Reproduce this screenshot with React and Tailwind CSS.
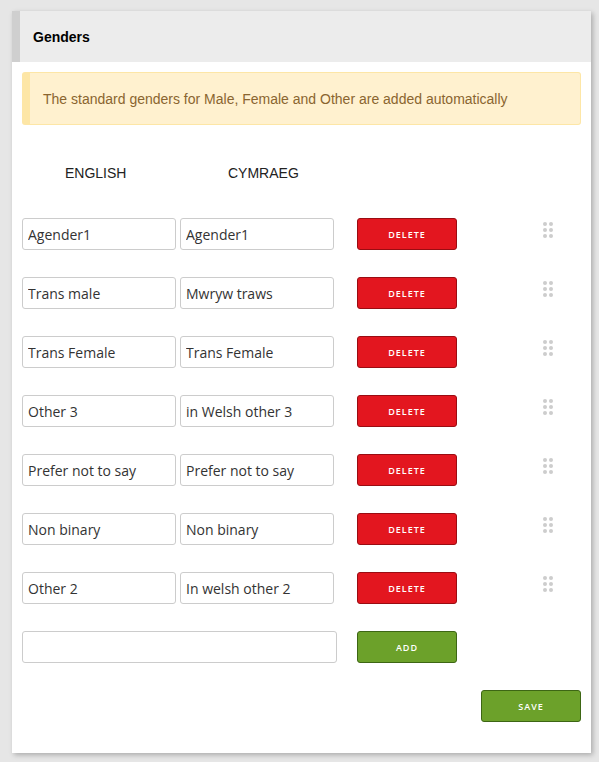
import React from "react";

const rows = [
  ["Agender1", "Agender1"],
  ["Trans male", "Mwryw traws"],
  ["Trans Female", "Trans Female"],
  ["Other 3", "in Welsh other 3"],
  ["Prefer not to say", "Prefer not to say"],
  ["Non binary", "Non binary"],
  ["Other 2", "In welsh other 2"],
];

function Dots() {
  return (
    <div className="grid grid-cols-2 gap-x-[2px] gap-y-[2px] w-[10px]">
      {Array.from({ length: 6 }).map((_, i) => (
        <span key={i} className="block w-[4px] h-[4px] rounded-full bg-[#cdcdcd]" />
      ))}
    </div>
  );
}

const inputCls =
  "h-[32px] border border-[#cccccc] rounded-[3px] px-[5px] text-[14px] text-[#333] bg-white outline-none font-['Open_Sans',sans-serif]";

const btnText = "text-white text-[9px] font-semibold tracking-[1px] pt-[2px] font-['Open_Sans',sans-serif]";

export default function App() {
  return (
    <div className="min-h-[762px] bg-[#e6e6e6] pt-[11px] pl-[12px] font-['Liberation_Sans',Arial,sans-serif]">
      <div className="w-[579px] bg-white shadow-[2px_2px_5px_rgba(0,0,0,0.25)]">
        <div className="h-[51px] bg-[#ececec] border-l-[8px] border-[#cfcfcf] flex items-center pl-[13px] pt-[2px]">
          <h1 className="text-[14px] font-bold text-black">Genders</h1>
        </div>
        <div className="px-[10px] pt-[10px] pb-[31px]">
          <div className="h-[53px] bg-[#fff1cf] border border-[#fde6a6] border-l-[8px] rounded-[3px] flex items-center pl-[13px] pt-[1px] text-[14px] text-[#8a6530]">
            The standard genders for Male, Female and Other are added automatically
          </div>
          <div className="flex h-[93px] items-center text-[14px] text-[#222] pt-[3px]">
            <span className="w-[158px] pl-[43px]">ENGLISH</span>
            <span className="pl-[48px]">CYMRAEG</span>
          </div>
          <div className="flex flex-col gap-[27px]">
            {rows.map(([en, cy], i) => (
              <div key={i} className="flex items-center">
                <input className={`${inputCls} w-[154px]`} defaultValue={en} />
                <input className={`${inputCls} w-[154px] ml-[4px]`} defaultValue={cy} />
                <button className={`ml-[23px] w-[100px] h-[32px] bg-[#e3161f] border border-[#9a0c12] rounded-[3px] ${btnText}`}>
                  DELETE
                </button>
                <div className="ml-[86px] -mt-[8px]">
                  <Dots />
                </div>
              </div>
            ))}
            <div className="flex items-center">
              <input className={`${inputCls} w-[315px]`} defaultValue="" />
              <button className={`ml-[20px] w-[100px] h-[32px] bg-[#6ca12a] border border-[#3d6614] rounded-[3px] ${btnText}`}>
                ADD
              </button>
            </div>
          </div>
          <div className="flex justify-end mt-[27px]">
            <button className={`w-[100px] h-[32px] bg-[#6ca12a] border border-[#3d6614] rounded-[3px] ${btnText}`}>
              SAVE
            </button>
          </div>
        </div>
      </div>
    </div>
  );
}
